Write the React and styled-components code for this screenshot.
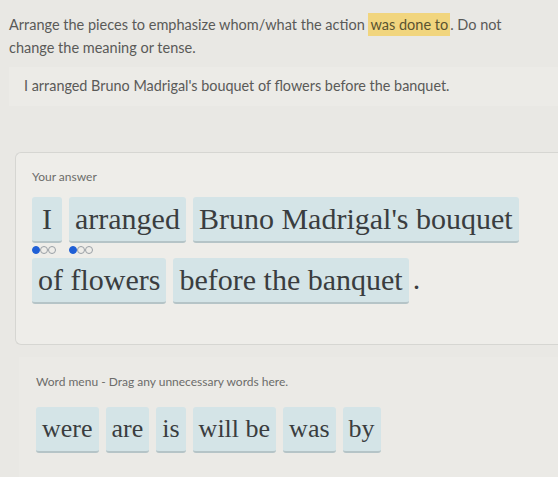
import React from 'react';
import styled, { createGlobalStyle } from 'styled-components';

const GlobalStyle = createGlobalStyle`
  html, body {
    margin: 0;
    padding: 0;
    background: #e9e8e4;
    overflow: hidden;
  }
`

const Page = styled.div`
  width: 558px;
  height: 477px;
  box-sizing: border-box;
  padding: 13px 0 0 9px;
  font-family: "Lato", "Liberation Sans", sans-serif;
  color: #5a5a58;
`

const Prompt = styled.p`
  margin: 0;
  font-size: 14.5px;
  line-height: 23px;
  width: 500px;
`

const Mark = styled.span`
  display: inline-block;
  background: #f1d57e;
  color: #5a5330;
  padding: 0 2px;
  line-height: 23px;
`

const Sentence = styled.div`
  margin: 8px 0 0 0;
  padding: 10px 15px 12px;
  font-size: 14.4px;
  background: #ecebe7;
  width: 520px;
`

const AnswerPanel = styled.section`
  margin: 46px 0 0 6px;
  width: 560px;
  height: 193px;
  box-sizing: border-box;
  border: 1px solid #d6d6d2;
  border-right: none;
  border-radius: 6px 0 0 6px;
  background: #eeede9;
  padding: 16px 0 0 16px;
`

const Label = styled.div`
  font-size: 12px;
  line-height: 16px;
  color: #6c6c6a;
`

const TileRow = styled.div`
  display: flex;
  gap: 7px;
  align-items: flex-start;
  margin-top: ${p => p.$top || 0}px;
`

const TileWrap = styled.div`
  display: flex;
  flex-direction: column;
`

const Tile = styled.div`
  background: #d4e4e7;
  border-bottom: 2px solid #b5c4c7;
  border-radius: 3px;
  padding: 3px 6px 3px;
  min-width: ${p => p.$min || 0}px;
  box-sizing: border-box;
  text-align: center;
  font-family: "Liberation Serif", "DejaVu Serif", serif;
  font-size: ${p => p.$size || 30}px;
  line-height: 38px;
  color: #3a3d3f;
  white-space: nowrap;
`

const Period = styled.span`
  font-family: "Liberation Serif", serif;
  font-size: 30px;
  line-height: 42px;
  color: #3a3d3f;
  margin-left: -3px;
`

const Dots = styled.div`
  display: flex;
  margin-top: 3px;
`

const Dot = styled.span`
  width: 8px;
  height: 8px;
  border-radius: 50%;
  box-sizing: border-box;
  background: ${p => (p.$on ? '#1f5fd6' : 'transparent')};
  border: 1.2px solid ${p => (p.$on ? '#1f5fd6' : '#9aa0a6')};
`

const MenuPanel = styled.section`
  margin: 12px 0 0 10px;
  padding: 17px 0 0 17px;
  background: #ebeae6;
  height: 120px;
`

const Level = () => (
  <Dots>
    <Dot $on />
    <Dot />
    <Dot />
  </Dots>
)

const App = () => (
  <Page>
    <GlobalStyle />
    <Prompt>
      Arrange the pieces to emphasize whom/what the action <Mark>was done to</Mark>. Do not change the meaning or tense.
    </Prompt>
    <Sentence>I arranged Bruno Madrigal's bouquet of flowers before the banquet.</Sentence>
    <AnswerPanel>
      <Label>Your answer</Label>
      <TileRow $top={12}>
        <TileWrap>
          <Tile $min={30}>I</Tile>
          <Level />
        </TileWrap>
        <TileWrap>
          <Tile>arranged</Tile>
          <Level />
        </TileWrap>
        <Tile>Bruno Madrigal's bouquet</Tile>
      </TileRow>
      <TileRow $top={4}>
        <Tile>of flowers</Tile>
        <Tile>before the banquet</Tile>
        <Period>.</Period>
      </TileRow>
    </AnswerPanel>
    <MenuPanel>
      <Label>Word menu - Drag any unnecessary words here.</Label>
      <TileRow $top={17}>
        <Tile $size={26}>were</Tile>
        <Tile $size={26}>are</Tile>
        <Tile $size={26}>is</Tile>
        <Tile $size={26}>will be</Tile>
        <Tile $size={26}>was</Tile>
        <Tile $size={26}>by</Tile>
      </TileRow>
    </MenuPanel>
  </Page>
);

export default App;
